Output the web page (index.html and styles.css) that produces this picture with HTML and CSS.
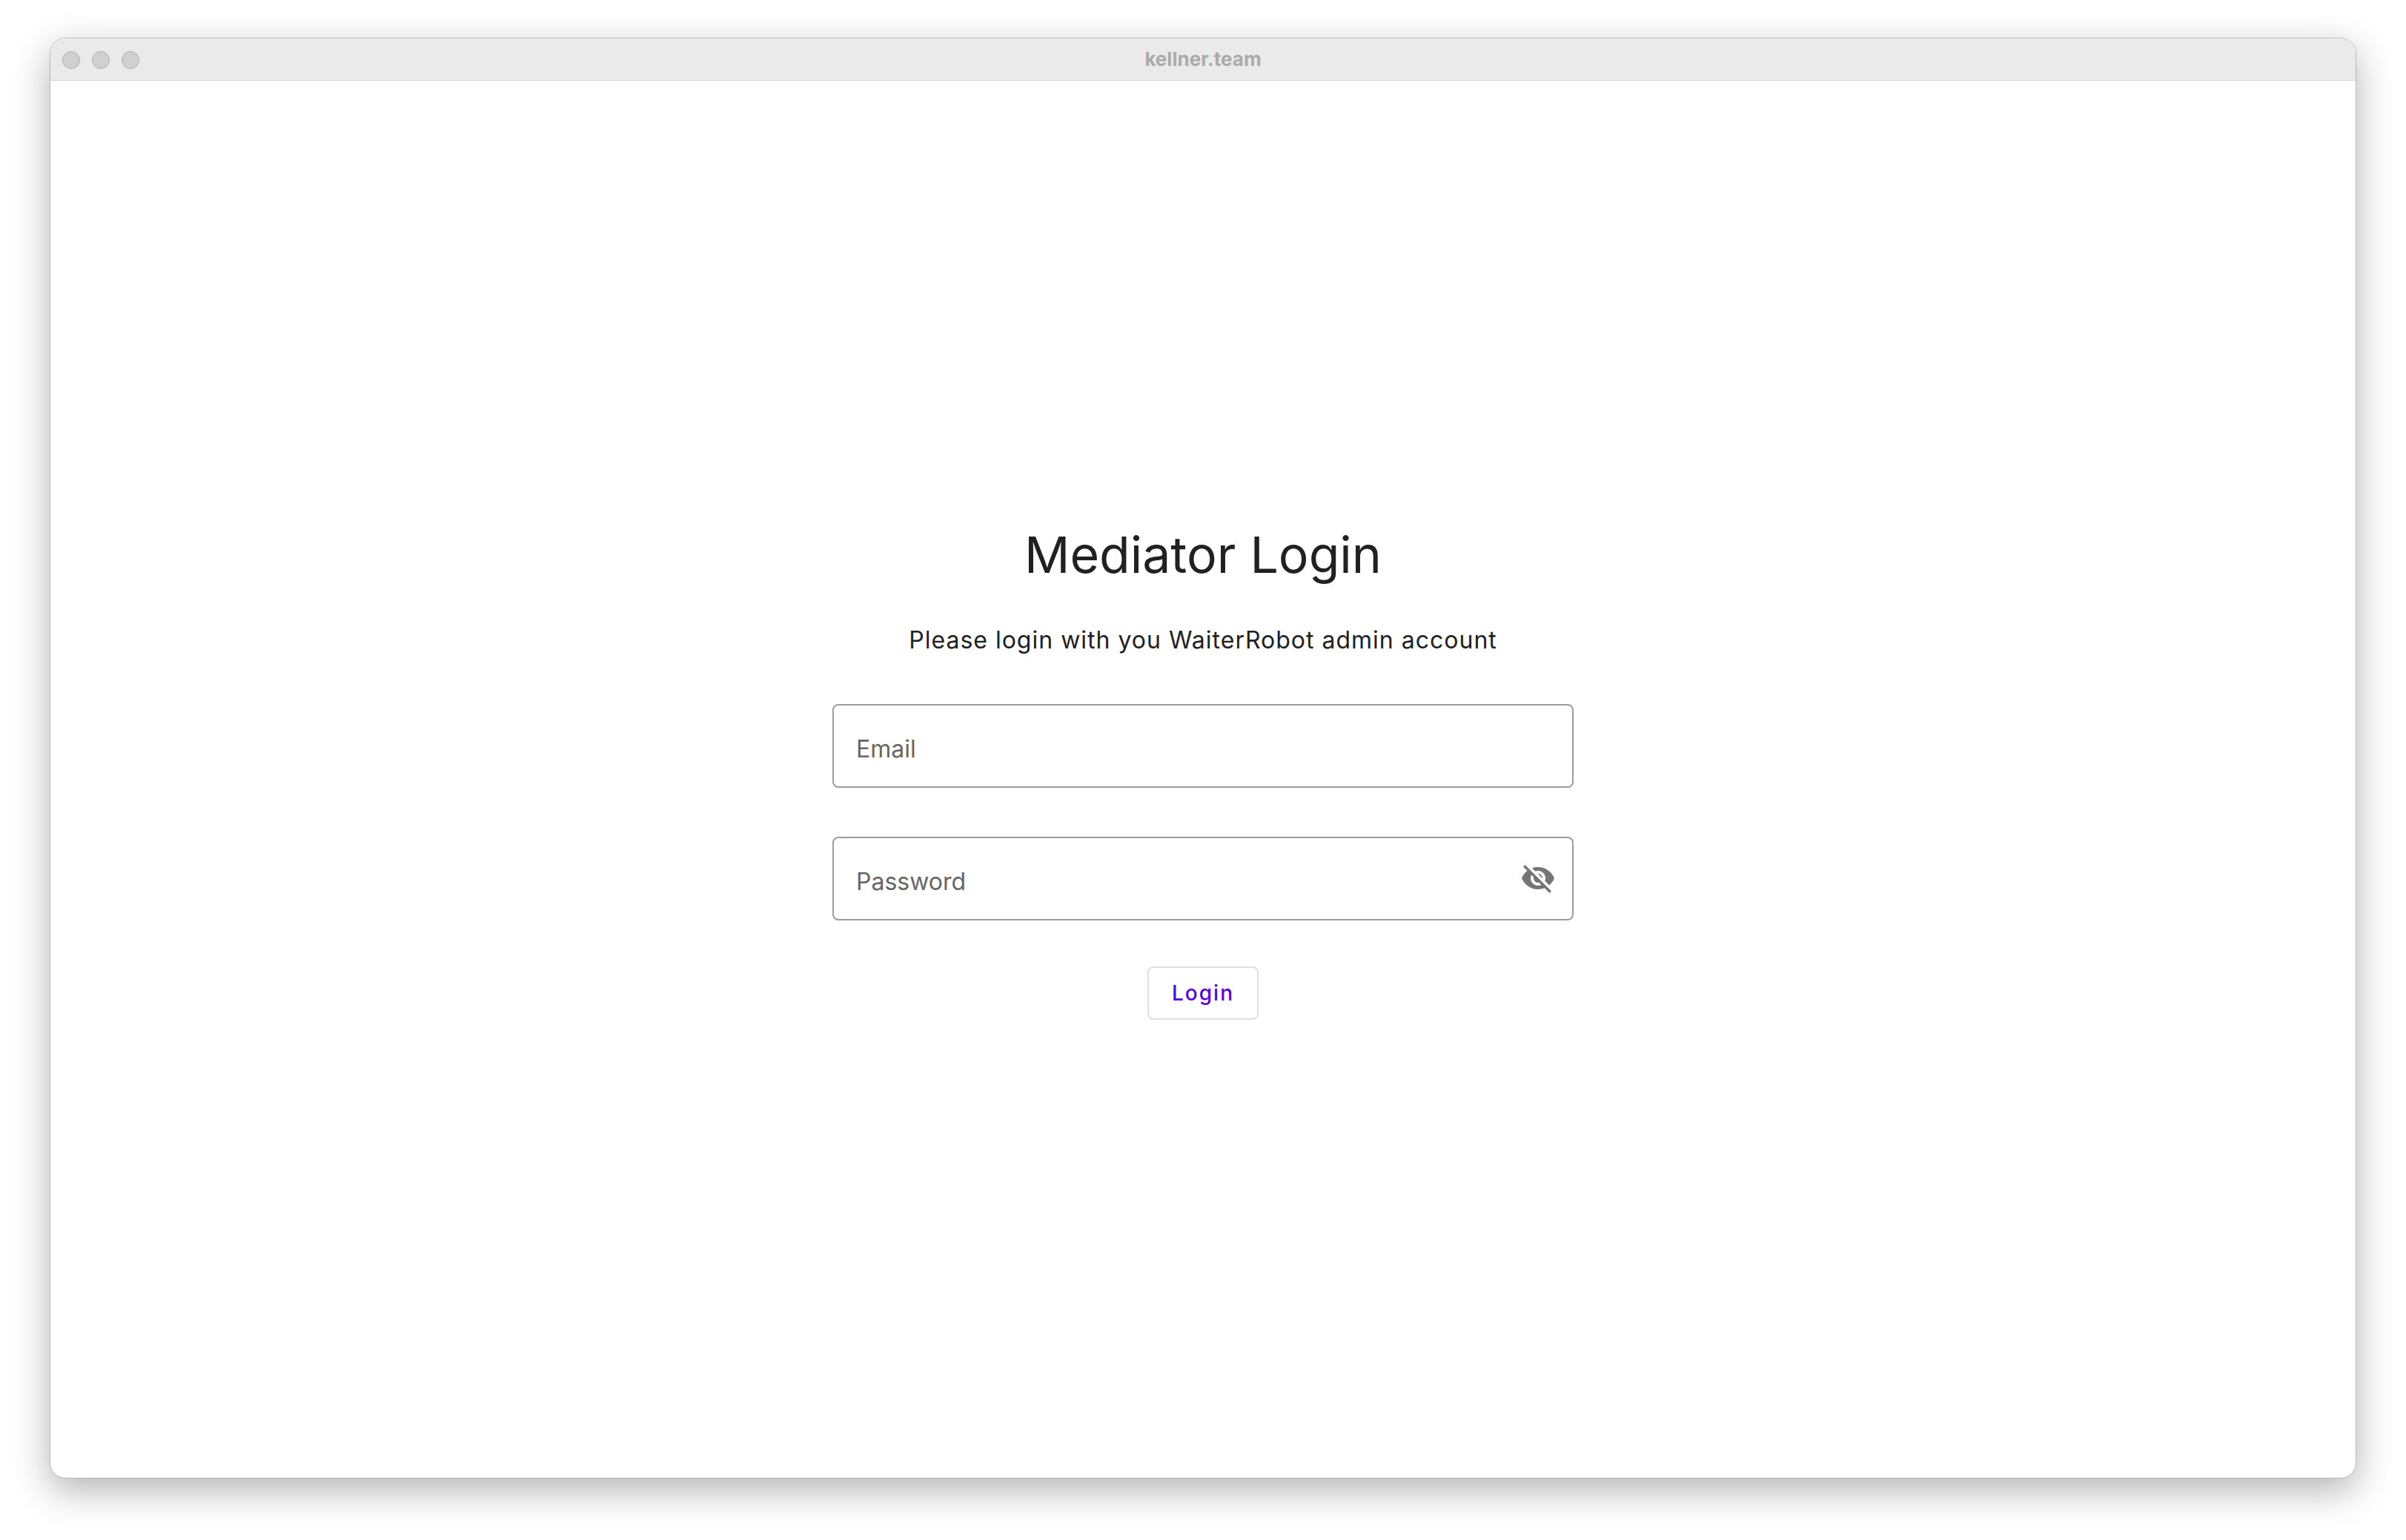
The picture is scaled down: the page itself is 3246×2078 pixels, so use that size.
FILE: index.html
```html
<!DOCTYPE html>
<html lang="en">
<head>
<meta charset="utf-8">
<meta name="viewport" content="width=device-width, initial-scale=1">
<title>kellner.team</title>
<link rel="stylesheet" href="styles.css">
</head>
<body>
<div class="window">
  <header class="titlebar">
    <div class="controls">
      <button class="control" type="button" aria-label="Close"></button>
      <button class="control" type="button" aria-label="Minimize"></button>
      <button class="control" type="button" aria-label="Zoom"></button>
    </div>
    <div class="title">kellner.team</div>
  </header>
  <main class="content">
    <form class="login">
      <h1 class="heading">Mediator Login</h1>
      <p class="hint">Please login with you WaiterRobot admin account</p>
      <div class="fields">
        <div class="field">
          <input class="input" id="email" type="email" placeholder=" ">
          <label class="label" for="email">Email</label>
        </div>
        <div class="field">
          <input class="input" id="password" type="password" placeholder=" ">
          <label class="label" for="password">Password</label>
          <button class="toggle" type="button" aria-label="Show password">
            <svg class="icon" viewBox="0 0 24 24" aria-hidden="true"><path d="M12 7c2.76 0 5 2.24 5 5 0 .65-.13 1.26-.36 1.83l2.92 2.92c1.51-1.26 2.7-2.89 3.43-4.75-1.73-4.39-6-7.5-11-7.5-1.4 0-2.74.25-3.98.7l2.16 2.16C10.74 7.13 11.35 7 12 7zM2 4.27l2.28 2.28.46.46C3.08 8.3 1.78 10.02 1 12c1.73 4.39 6 7.5 11 7.5 1.55 0 3.03-.3 4.38-.84l.42.42L19.73 22 21 20.73 3.27 3 2 4.27zM7.53 9.8l1.55 1.55c-.05.21-.08.43-.08.65 0 1.66 1.34 3 3 3 .22 0 .44-.03.65-.08l1.55 1.55c-.67.33-1.41.53-2.2.53-2.76 0-5-2.24-5-5 0-.79.2-1.53.53-2.2zm4.31-.78l3.15 3.15.02-.16c0-1.66-1.34-3-3-3l-.17.01z"/></svg>
          </button>
        </div>
      </div>
      <button class="submit" type="submit">Login</button>
    </form>
  </main>
</div>
</body>
</html>
```
FILE: styles.css
```css
* {
  box-sizing: border-box;
}

body {
  margin: 0;
  min-height: 100vh;
  padding: 51px 67px 83px;
  display: flex;
  background: #fff;
  color: #212121;
  font-family: Inter, "Liberation Sans", sans-serif;
}

.window {
  flex: 1;
  display: flex;
  flex-direction: column;
  border: 1px solid #b8b8b8;
  border-radius: 21px;
  background: #fff;
  box-shadow: 0 16px 50px rgba(0, 0, 0, 0.3);
}

.titlebar {
  display: grid;
  grid-template-columns: 1fr auto 1fr;
  align-items: center;
  height: 57px;
  padding: 0 16px;
  border-top: 1px solid #f4f4f4;
  border-bottom: 1px solid #d6d6d6;
  border-radius: 20px 20px 0 0;
  background: #eaeaea;
}

.controls {
  display: flex;
  gap: 16px;
}

.control {
  width: 24px;
  height: 24px;
  padding: 0;
  border: 1px solid #b0b0b0;
  border-radius: 50%;
  background: #d0d0d0;
}

.title {
  padding-bottom: 2px;
  color: #ababab;
  font-size: 26px;
  font-weight: 700;
  line-height: 32px;
}

.content {
  flex: 1;
  display: flex;
  align-items: center;
  justify-content: center;
  padding: 0 32px 19px;
}

.login {
  width: 100%;
  max-width: 1000px;
  display: flex;
  flex-direction: column;
  align-items: center;
}

.heading {
  margin: 0 0 53px;
  font-size: 68px;
  font-weight: 400;
  line-height: 78px;
}

.hint {
  margin: 0 0 62px;
  font-size: 32px;
  line-height: 48px;
  letter-spacing: 1px;
}

.fields {
  align-self: stretch;
  display: grid;
  gap: 66px;
  margin-bottom: 62px;
}

.field {
  display: grid;
  grid-template-columns: 1fr auto;
  align-items: center;
  height: 113px;
  border: 2px solid #9c9c9c;
  border-radius: 8px;
}

.field:focus-within {
  border-color: #6200ee;
}

.input,
.label {
  grid-row: 1;
  grid-column: 1;
  padding: 10px 30px 0;
  font-size: 32px;
  line-height: 48px;
}

.input {
  width: 100%;
  border: 0;
  outline: 0;
  background: transparent;
  color: #212121;
  font-family: inherit;
}

.label {
  color: #666;
  pointer-events: none;
}

.input:not(:placeholder-shown) + .label {
  visibility: hidden;
}

.toggle {
  display: flex;
  margin-right: 22px;
  padding: 0;
  border: 0;
  background: transparent;
}

.icon {
  width: 48px;
  height: 48px;
  fill: #757575;
}

.submit {
  padding: 16px 31px;
  border: 2px solid #e0e0e0;
  border-radius: 8px;
  background: #fff;
  color: #5600e8;
  font-family: inherit;
  font-size: 28px;
  font-weight: 500;
  line-height: 36px;
  letter-spacing: 2px;
}
```
